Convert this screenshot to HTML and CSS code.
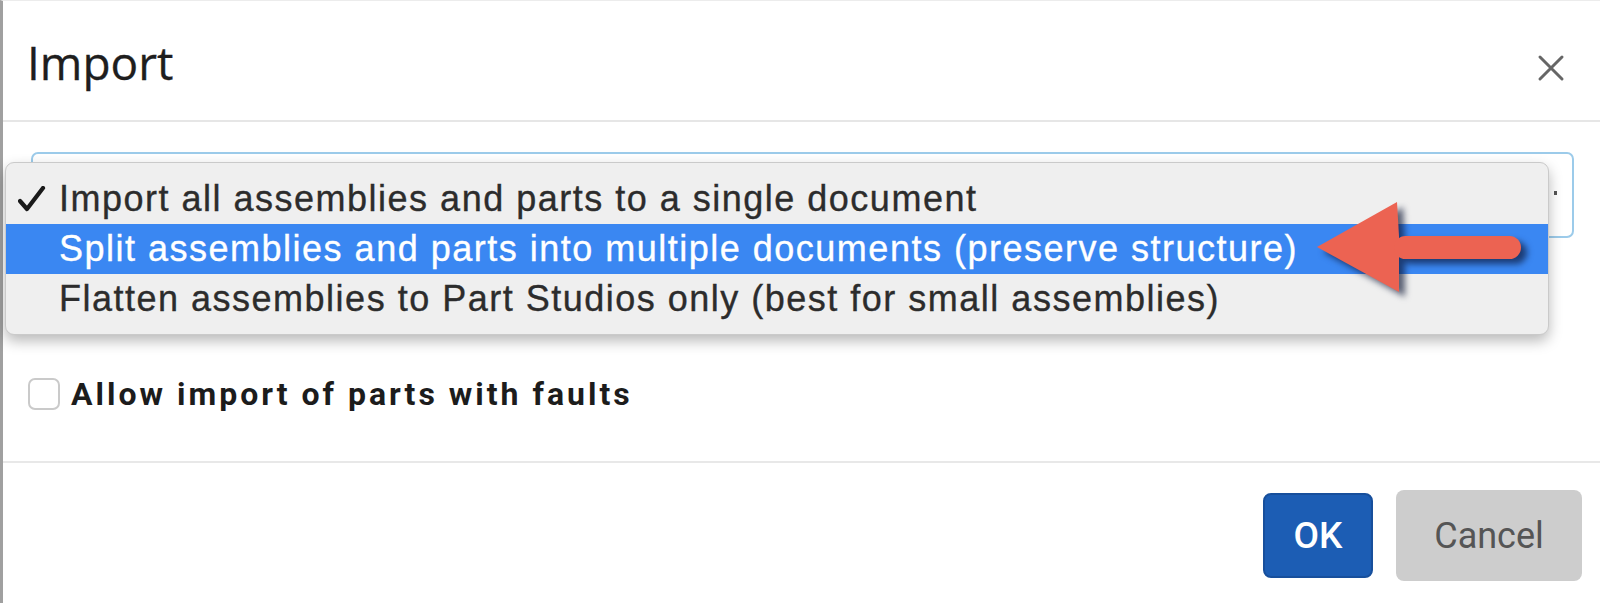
FILE: index.html
```html
<!DOCTYPE html>
<html>
<head>
<meta charset="utf-8">
<link rel="stylesheet" href="styles.css">
</head>
<body>
<div class="dialog">
  <div class="header">
    <div class="title">Import</div>
    <svg class="close" width="30" height="30" viewBox="0 0 30 30"><path d="M4 4 L26 26 M26 4 L4 26" stroke="#666" stroke-width="3" stroke-linecap="round"/></svg>
  </div>
  <div class="body">
    <div class="select">
      <span class="chev"></span>
      <div class="menu">
        <div class="item"><svg class="check" width="28" height="26" viewBox="0 0 28 26"><path d="M2 15 L9 23 L25 2" fill="none" stroke="#1a1a1a" stroke-width="4.2" stroke-linecap="round" stroke-linejoin="round"/></svg>Import all assemblies and parts to a single document</div>
        <div class="item active">Split assemblies and parts into multiple documents (preserve structure)</div>
        <div class="item">Flatten assemblies to Part Studios only (best for small assemblies)</div>
      </div>
      <svg class="arrow" width="240" height="120" viewBox="0 0 240 120">
        <polygon points="15,55 95,10 97,44 97,67 97,100" fill="#ec6352"/>
        <rect x="92" y="44" width="127" height="23" rx="11.5" fill="#ec6352"/>
      </svg>
    </div>
    <label class="opt"><span class="box"></span><span class="opt-text">Allow import of parts with faults</span></label>
  </div>
  <div class="footer">
    <button class="btn ok">OK</button>
    <button class="btn cancel">Cancel</button>
  </div>
</div>
</body>
</html>
```
FILE: styles.css
```css
html, body { margin: 0; padding: 0; background: #fff; }
body { width: 1600px; height: 603px; overflow: hidden; }
.dialog {
  box-sizing: border-box;
  height: 603px;
  border-left: 3px solid #a0a0a0;
  border-top: 1px solid #ececec;
  display: flex;
  flex-direction: column;
  background: #fff;
}
.header {
  height: 121px;
  flex: none;
  box-sizing: border-box;
  display: flex;
  align-items: center;
  justify-content: space-between;
  padding: 2px 34px 0 24px;
  border-bottom: 2px solid #e6e6e6;
}
.title {
  font-family: "Open Sans", sans-serif;
  font-size: 46px;
  color: #1e1e1e;
  -webkit-text-stroke: 0.3px #1e1e1e;
}
.close { margin-top: 12px; }
.body {
  flex: 1;
  padding: 30px 26px 0 28px;
  border-bottom: 2px solid #e8e8e8;
}
.select {
  position: relative;
  height: 82px;
  border: 2px solid #9ccbea;
  border-radius: 7px;
  background: #fff;
}
.chev {
  position: absolute;
  right: 15px;
  top: 37px;
  width: 3px;
  height: 4px;
  background: #555;
}
.menu {
  position: absolute;
  left: -28px;
  top: 8px;
  width: 1544px;
  box-sizing: border-box;
  padding: 11px 0 10px;
  background: #efefef;
  border: 1px solid #cacaca;
  border-radius: 9px;
  box-shadow: 0 6px 14px rgba(0,0,0,0.28);
  font-family: "Liberation Sans", Arial, sans-serif;
  font-size: 36px;
  letter-spacing: 1.5px;
  color: #2c2c2c;
  -webkit-text-stroke: 0.35px currentColor;
}
.item {
  position: relative;
  height: 50px;
  line-height: 50px;
  padding-left: 53px;
  white-space: nowrap;
}
.item.active { background: #3a87f2; color: #fff; }
.check {
  position: absolute;
  left: 12px;
  top: 12px;
}
.arrow {
  position: absolute;
  left: 1269px;
  top: 38px;
  filter: drop-shadow(6px 5px 3px rgba(10,20,50,0.65));
}
.opt {
  display: flex;
  align-items: center;
  margin-top: 137px;
}
.box {
  width: 28px;
  height: 28px;
  border: 2px solid #cacaca;
  border-radius: 7px;
  background: #fff;
  margin-right: 11px;
  margin-left: -3px;
}
.opt-text {
  font-family: Roboto, sans-serif;
  font-weight: 700;
  font-size: 32px;
  letter-spacing: 3px;
  color: #1c1c1c;
}
.footer {
  height: 140px;
  flex: none;
  box-sizing: border-box;
  display: flex;
  align-items: center;
  justify-content: flex-end;
  gap: 23px;
  padding: 5px 18px 0 0;
}
.btn {
  font-family: Roboto, sans-serif;
  border-radius: 8px;
  cursor: pointer;
}
.ok {
  width: 110px;
  height: 85px;
  background: #1c5db4;
  border: 2px solid #174f9c;
  color: #fff;
  font-size: 37px;
  font-weight: 500;
}
.cancel {
  width: 186px;
  height: 91px;
  background: #cdcdcd;
  border: none;
  color: #555;
  font-size: 36px;
}
```
